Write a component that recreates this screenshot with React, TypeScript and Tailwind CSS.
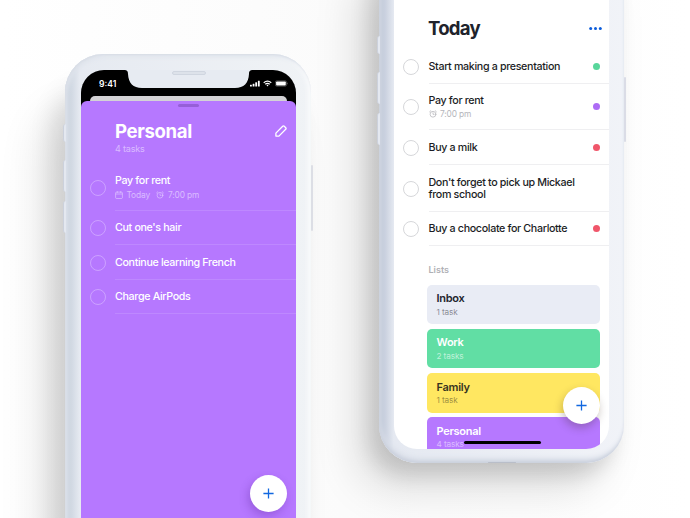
import React from "react";

function Alarm({ className = "" }: { className?: string }) {
  return (
    <svg viewBox="0 0 16 16" className={"h-2 w-2 " + className} fill="none" stroke="currentColor" strokeWidth="1.5" strokeLinecap="round">
      <circle cx="8" cy="8.5" r="5.8" />
      <path d="M8 5.5v3.2h2.3M1.2 3.6 3.6 1.4M14.8 3.6 12.4 1.4" />
    </svg>
  );
}

function CalendarIcon() {
  return (
    <svg viewBox="0 0 16 16" className="h-2 w-2" fill="none" stroke="currentColor" strokeWidth="1.5">
      <rect x="1.2" y="2.2" width="13.6" height="12.8" rx="2" />
      <path d="M1.2 6h13.6M4.6 .5v3M11.4 .5v3" />
    </svg>
  );
}

function Fab({ className }: { className: string }) {
  return (
    <button className={"absolute flex h-[37px] w-[37px] items-center justify-center rounded-full bg-white " + className}>
      <svg viewBox="0 0 11 11" className="h-[11px] w-[11px]" stroke="#1268e0" strokeWidth="1.3">
        <path d="M5.5 .4v10.2M.4 5.5h10.200" />
      </svg>
    </button>
  );
}

function SideButton({ className }: { className: string }) {
  return <i className={"absolute block w-[3px] rounded-l-full border-l border-[#ccd1dc] bg-[#e4e8f0] " + className} />;
}

type Row = { title: string; time?: string; date?: string; dot?: string; height: string };

const personal: Row[] = [
  { title: "Pay for rent", date: "Today", time: "7:00 pm", height: "h-[46.5px]" },
  { title: "Cut one's hair", height: "h-[34.5px]" },
  { title: "Continue learning French", height: "h-[34.5px]" },
  { title: "Charge AirPods", height: "h-[34.5px]" },
];

const today: Row[] = [
  { title: "Start making a presentation", dot: "bg-[#58d69b]", height: "h-[34.5px]" },
  { title: "Pay for rent", time: "7:00 pm", dot: "bg-[#ad6cf5]", height: "h-[46.5px]" },
  { title: "Buy a milk", dot: "bg-[#f0566a]", height: "h-[35px]" },
  { title: "Don't forget to pick up Mickael from school", height: "h-[46.5px]" },
  { title: "Buy a chocolate for Charlotte", dot: "bg-[#f0566a]", height: "h-[34px]" },
];

function TaskRow({ row, dark }: { row: Row; dark: boolean }) {
  return (
    <li className={"flex items-center pl-[9px] " + row.height}>
      <i className={"mt-[1px] mr-[9.5px] block h-4 w-4 shrink-0 rounded-full border-[1.5px] " + (dark ? "border-white/30" : "border-[#d6d7da]")} />
      <div className={"flex h-full flex-1 items-center border-b pr-[9px] " + (dark ? "border-white/12" : "border-[#efeff1]")}>
        <div className="flex-1 pt-[1.500px]">
          <p className={"max-w-[156px] text-[10.7px] leading-3 font-medium tracking-[-0.34px] " + (dark ? "text-white" : "text-[#1b1d25]")}>{row.title}</p>
          {row.time && (
            <p className={"mt-[2.500px] flex items-center gap-[3.5px] text-[8.4px] leading-[10px] tracking-[-0.15px] " + (dark ? "text-white/50" : "text-[#b5b6bb]")}>
              {row.date && (
                <>
                  <CalendarIcon />
                  <span className="mr-[3px]">{row.date}</span>
                </>
              )}
              <Alarm />
              <span>{row.time}</span>
            </p>
          )}
        </div>
        {row.dot && <i className={"mt-[1px] block h-[7px] w-[7px] rounded-full " + row.dot} />}
      </div>
    </li>
  );
}

const lists = [
  { name: "Inbox", count: "1 task", box: "bg-[#e9ecf5] text-[#23252d]", sub: "text-[#23252d]/50" },
  { name: "Work", count: "2 tasks", box: "bg-[#61dea4] text-white", sub: "text-white/60" },
  { name: "Family", count: "1 task", box: "bg-[#ffe761] text-[#38341f]", sub: "text-[#38341f]/50" },
  { name: "Personal", count: "4 tasks", box: "bg-[#b678ff] text-white", sub: "text-white/50" },
];

function PersonalPhone() {
  return (
    <section className="relative mt-[54px] h-[520px] w-[246px] shrink-0 rounded-t-[38px] bg-linear-to-r from-[#c1cbd8] via-[#e6eaf1] via-6% to-[#f0f3f6] px-[15.5px] pt-4 shadow-[-12px_32px_24px_rgba(0,0,0,0.11),-24px_56px_44px_rgba(0,0,0,0.11),inset_1px_1px_2px_#d8dde6,inset_3px_3px_4px_#dfe4ec,inset_-3px_0_4px_#fafbfc]">
      <SideButton className="top-[70px] -left-[2px] h-[18px]" />
      <SideButton className="top-[106px] -left-[2px] h-8" />
      <SideButton className="top-[147px] -left-[2px] h-8" />
      <i className="absolute top-[111px] -right-[2px] block h-[66px] w-[2px] rounded-full bg-[#dcdee5]" />
      <div className="relative flex h-full flex-col overflow-hidden rounded-t-[23px] bg-black">
        <svg viewBox="0 0 130 18" className="absolute top-0 left-[43px] h-[18px] w-[130px]" fill="#e7ebf2">
          <path d="M0 0c3 0 4 1 4 4 .5 9 5 14 14 14h93c9 0 13.500-5 14-14 0-3 1-4 4-4Z" />
        </svg>
        <i className="absolute top-[1px] left-[91px] block h-[4px] w-[34px] rounded-full border border-[#d0d6e0] bg-[#dde2ea]" />
        <header className="flex h-[25.5px] items-center justify-between pr-[8px] pl-[18.5px] text-white">
          <span className="pt-[3px] text-[8.6px] font-semibold">9:41</span>
          <span className="flex items-center gap-[3px] pt-[2px]">
            <svg viewBox="0 0 11 7" className="h-[7px] w-[10px]" fill="currentColor">
              <rect y="4.800" width="2" height="2" rx=".4" />
              <rect x="2.900" y="3.700" width="2" height="3.100" rx=".4" />
              <rect x="5.800" y="2.200" width="2" height="4.600" rx=".4" />
              <rect x="8.700" y=".4" width="2" height="6.400" rx=".4" />
            </svg>
            <svg viewBox="0 0 10 7" className="h-[7px] w-[9px]" fill="none" stroke="currentColor" strokeWidth="1.300">
              <path d="M.8 2.600q4.200-3.600 8.400 0M2.500 4.300q2.500-2.100 5 0" />
              <path d="M3.800 5.300q1.200-.9 2.400 0L5 6.700Z" fill="currentColor" stroke="none" />
            </svg>
            <svg viewBox="0 0 14 7" className="h-[7px] w-[13px]" fill="none">
              <rect x=".4" y=".6" width="12" height="5.800" rx="1.500" stroke="#777" strokeWidth=".6" />
              <rect x="1.200" y="1.300" width="10.400" height="4.400" rx=".8" fill="white" />
              <path d="M13.300 2.600v1.800" stroke="#777" strokeWidth=".7" />
            </svg>
          </span>
        </header>
        <div className="mx-[9px] h-[5px] shrink-0 rounded-t-[5px] bg-[#d3d2d5]" />
        <div className="relative flex-1 rounded-t-[6px] bg-[#b678ff]">
          <i className="mx-auto mt-[3px] block h-[3px] w-[21px] rounded-full bg-[#965fd8]" />
          <div className="mt-[12px] flex items-center justify-between pr-[9px] pl-[34.500px] text-white">
            <h1 className="text-[18.6px] leading-6 font-bold tracking-[-0.36px]">Personal</h1>
            <svg viewBox="0 0 12 12" className="h-3 w-3" fill="none" stroke="currentColor" strokeWidth="1.300" strokeLinejoin="round">
              <path d="m.9 8.100 6.800-6.800Q8.500.5 9.300 1.300l1.400 1.400q.8.800 0 1.600L3.900 11.100H.9Z" />
            </svg>
          </div>
          <p className="pl-[34.500px] text-[9px] leading-3 tracking-[-0.16px] text-white/50">4 tasks</p>
          <ul className="mt-[9.500px]">
            {personal.map((row) => (
              <TaskRow key={row.title} row={row} dark />
            ))}
          </ul>
          <Fab className="top-[374px] right-[9px] shadow-[-2px_4px_10px_rgba(80,30,140,0.3)]" />
        </div>
      </div>
    </section>
  );
}

function TodayPhone() {
  return (
    <section className="relative -mt-[40px] h-[503px] w-[245px] shrink-0 rounded-b-[38px] bg-linear-to-r from-[#b7c0d2] via-[#e5e9f1] via-6% to-[#f1f3f8] px-[15px] pb-[14.5px] shadow-[-10px_12px_20px_rgba(0,0,0,0.13),-22px_26px_44px_rgba(0,0,0,0.13),inset_1px_-2px_3px_#cbd1dd,inset_2px_-5px_5px_#d9dee8]">
      <SideButton className="top-[76px] -left-[2px] h-[18px]" />
      <SideButton className="top-[112px] -left-[2px] h-8" />
      <SideButton className="top-[153px] -left-[2px] h-8" />
      <i className="absolute top-[117px] -right-[2px] block h-[65px] w-[2px] rounded-full bg-[#dadce6]" />
      <div className="relative h-full overflow-hidden rounded-b-[23px] bg-white pt-[56px]">
        <div className="flex items-center justify-between pr-[7px] pl-[34px]">
          <h1 className="text-[18.6px] leading-6 font-bold tracking-[-0.75px] text-[#20222b]">Today</h1>
          <svg viewBox="0 0 13 3" className="h-[3px] w-[13px]" fill="#0b5cdb">
            <circle cx="1.700" cy="1.500" r="1.500" />
            <circle cx="6.500" cy="1.500" r="1.500" />
            <circle cx="11.300" cy="1.500" r="1.500" />
          </svg>
        </div>
        <ul className="mt-[9px]">
          {today.map((row) => (
            <TaskRow key={row.title} row={row} dark={false} />
          ))}
        </ul>
        <h2 className="mt-[18px] pl-[34.500px] text-[9px] leading-3 font-semibold text-[#afb0b5]">Lists</h2>
        <ul className="mt-[9px] mr-[9px] ml-[33px] flex flex-col gap-[4.800px]">
          {lists.map((l) => (
            <li key={l.name} className={"h-[39.500px] rounded-[5px] pt-[7.500px] pl-[9.500px] " + l.box}>
              <p className="text-[11px] leading-3 font-semibold tracking-[-0.28px]">{l.name}</p>
              <p className={"mt-[2.500px] text-[8.200px] leading-[10px] tracking-[-0.1px] " + l.sub}>{l.count}</p>
            </li>
          ))}
        </ul>
        <Fab className="right-[9px] bottom-[25px] shadow-[-1px_4px_9px_rgba(60,40,30,0.28)]" />
        <i className="absolute bottom-[5px] left-[69.500px] block h-[3px] w-[77px] rounded-full bg-black" />
      </div>
      <i className="absolute bottom-0 left-[109px] block h-[1px] w-[28px] rounded-full bg-[#b9bec9]" />
    </section>
  );
}

export default function App() {
  return (
    <main className="flex h-[518px] w-[690px] items-start gap-[68px] overflow-hidden bg-linear-to-r from-white via-[#fbfbfb] to-white pl-[65px] font-['Inter','Liberation_Sans',sans-serif]">
      <PersonalPhone />
      <TodayPhone />
    </main>
  );
}
